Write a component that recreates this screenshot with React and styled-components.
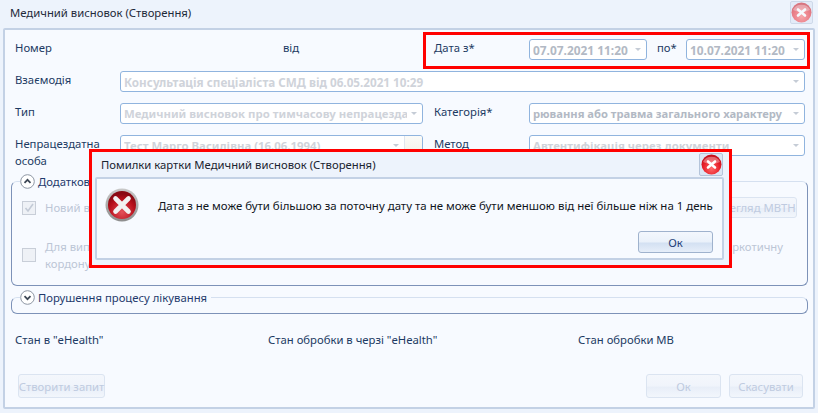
import React from 'react';
import styled, { createGlobalStyle } from 'styled-components';

const GlobalStyle = createGlobalStyle`
  html, body {
    margin: 0;
    padding: 0;
    overflow: hidden;
  }
  body {
    font-family: "Noto Sans", "Open Sans", sans-serif;
    font-size: 11.3px;
    color: #1c3a63;
  }
`;

const Window = styled.div`
  position: relative;
  width: 818px;
  height: 413px;
  box-sizing: border-box;
  display: flex;
  flex-direction: column;
  padding: 0 3px 4px;
  background: #edf3fc;
`;

const TitleBar = styled.div`
  height: 28px;
  flex: none;
  display: flex;
  align-items: center;
  justify-content: space-between;
  padding: 0 2px 3px 7px;
  box-sizing: border-box;
  color: #1e2a3a;
`;

const CloseButton = styled.div`
  width: ${(p) => (p.$wide ? 24 : 23)}px;
  height: 23px;
  display: flex;
  align-items: center;
  justify-content: center;
  box-sizing: border-box;
  border: 1px solid #b4c4da;
  border-radius: 2px;
  background: #dbe6f5;
  opacity: ${(p) => (p.$dim ? 0.55 : 1)};
`;

const Panel = styled.div`
  flex: 1;
  display: flex;
  flex-direction: column;
  box-sizing: border-box;
  padding: 9px 8px 9px 10px;
  border: 2px solid #c3d1e5;
  border-radius: 2px;
  background: #f7faff;
`;

const FormRow = styled.div`
  display: grid;
  grid-template-columns: 105px 303px 11px 95px 276px;
  margin-bottom: ${(p) => p.$gap ?? 11}px;
`;

const Label = styled.div`
  line-height: 17px;
  grid-column: ${(p) => p.$col ?? 'auto'};
`;

const Combo = styled.div`
  height: 21px;
  box-sizing: border-box;
  display: flex;
  align-items: center;
  padding: 0 ${(p) => (p.$split ? 0 : 5)}px 0 3px;
  border: 1px solid #90b4de;
  border-radius: 3px;
  background: #fff;
  font-weight: 700;
  font-size: ${(p) => p.$size ?? 11.4}px;
  color: ${(p) => (p.$dark ? '#b2b9c4' : '#cfd3da')};
  grid-column: ${(p) => p.$col ?? 'auto'};
  white-space: nowrap;
  width: ${(p) => (p.$w ? `${p.$w}px` : 'auto')};
  min-width: 0;
`;

const ComboText = styled.span`
  flex: 1;
  min-width: 0;
  overflow: hidden;
`;

const Arrow = styled.span`
  flex: none;
  margin-left: 4px;
  width: 0;
  height: 0;
  border-left: 3px solid transparent;
  border-right: 3px solid transparent;
  border-top: 3px solid #c5ccd6;
`;

const SplitEdge = styled.span`
  flex: none;
  align-self: stretch;
  width: 17px;
  margin-left: 5px;
  border-left: 1px solid #dfe5ee;
  border-radius: 0 2px 2px 0;
  background: linear-gradient(#fbfbf8, #f3f1e8);
`;

const FromLabel = styled.div`
  line-height: 17px;
  padding-left: 163px;
`;

const DateCell = styled.div`
  grid-column: 5;
  display: flex;
`;

const ToLabel = styled.div`
  width: 39px;
  padding-left: 10px;
  box-sizing: border-box;
  line-height: 17px;
  flex: none;
`;

const Group = styled.fieldset`
  margin: ${(p) => p.$top ?? 0}px -3px 0 -4px;
  padding: 7px 10px 0;
  min-width: 0;
  height: ${(p) => p.$h}px;
  box-sizing: border-box;
  border: 1px solid #7d92b8;
  border-top-color: #d5e0f0;
  border-radius: 6px;
`;

const GroupTitle = styled.legend`
  display: flex;
  align-items: center;
  gap: 3px;
  margin-left: -2px;
  padding: 0 4px 0 0;
  height: 18px;
  color: #1f3a6d;
`;

const Expander = styled.svg`
  width: 15px;
  height: 15px;
  flex: none;
`;

const OptionRow = styled.div`
  display: flex;
  align-items: flex-start;
  justify-content: space-between;
  height: ${(p) => p.$h}px;
  color: #bcc6d6;
`;

const Check = styled.label`
  display: flex;
  align-items: center;
  gap: 9px;
  min-height: 21px;
  line-height: 17px;
`;

const CheckBox = styled.span`
  width: 14px;
  height: 14px;
  flex: none;
  box-sizing: border-box;
  display: flex;
  align-items: center;
  justify-content: center;
  border: 1px solid #c8ced8;
  background: #eef1f6;
`;

const SideText = styled.div`
  line-height: 17px;
  margin-right: 14px;
`;

const StateRow = styled.div`
  display: grid;
  grid-template-columns: 253px 310px auto;
  margin-top: 23px;
  line-height: 17px;
`;

const Footer = styled.div`
  margin-top: auto;
  margin-left: 3px;
  display: flex;
  justify-content: space-between;
`;

const Actions = styled.div`
  display: flex;
  gap: 8px;
  margin-right: 2px;
`;

const Button = styled.div`
  width: ${(p) => p.$w}px;
  height: ${(p) => p.$h ?? 24}px;
  box-sizing: border-box;
  display: flex;
  align-items: center;
  justify-content: center;
  border: 1px solid ${(p) => (p.$active ? '#9fb2cd' : '#dbe4f1')};
  border-radius: 3px;
  background: ${(p) =>
    p.$active
      ? 'linear-gradient(#f3f7fd 0%, #eaf1fa 50%, #d3e0f2 55%, #e6eef9 100%)'
      : 'linear-gradient(#f4f7fc 0%, #f0f4fb 50%, #e8eef8 55%, #f2f6fc 100%)'};
  color: ${(p) => (p.$active ? '#1f3f78' : '#bfcbe0')};
  white-space: nowrap;
`;

const Highlight = styled.div`
  position: absolute;
  left: 423px;
  top: 32px;
  width: 387px;
  height: 37px;
  box-sizing: border-box;
  border: 3px solid #f00;
  pointer-events: none;
`;

const Dialog = styled.div`
  position: absolute;
  left: 89px;
  top: 149px;
  width: 643px;
  height: 119px;
  box-sizing: border-box;
  display: flex;
  flex-direction: column;
  padding: 0 5px 5px 3px;
  border: 3px solid #f00;
  background: #edf3fc;
`;

const DialogTitle = styled(TitleBar)`
  height: 25px;
  padding: 0 1px 0 6px;
  color: #1a2430;
`;

const DialogBody = styled.div`
  flex: 1;
  display: flex;
  flex-direction: column;
  box-sizing: border-box;
  padding: 9px 9px 4px 8px;
  border: 2px solid #c3d1e5;
  border-radius: 2px;
  background: #f7faff;
`;

const Message = styled.div`
  display: flex;
  align-items: center;
  gap: 19px;
  font-size: 11.45px;
  color: #10151c;
  white-space: nowrap;
`;

const DialogFooter = styled.div`
  margin-top: auto;
  padding-bottom: 1px;
  display: flex;
  justify-content: flex-end;
`;

const CloseIcon = ({ id }) => (
  <svg width="21" height="21" viewBox="0 0 21 21">
    <defs>
      <radialGradient id={id} cx="50%" cy="70%" r="60%">
        <stop offset="0%" stopColor="#ff6a6a" />
        <stop offset="70%" stopColor="#e8202a" />
        <stop offset="100%" stopColor="#c8101c" />
      </radialGradient>
    </defs>
    <circle cx="10.5" cy="10.5" r="10" fill={`url(#${id})`} />
    <path d="M2 8a9 8 0 0 1 17 0q-8.500 4-17 0z" fill="#fff" opacity="0.35" />
    <path d="M7 7.500l7 6M14 7.500l-7 6" stroke="#fff" strokeWidth="2.600" strokeLinecap="round" />
  </svg>
);

const ErrorIcon = () => (
  <svg width="34" height="34" viewBox="0 0 34 34">
    <defs>
      <radialGradient id="errFill" cx="50%" cy="75%" r="65%">
        <stop offset="0%" stopColor="#e4525a" />
        <stop offset="70%" stopColor="#b8101c" />
        <stop offset="100%" stopColor="#8a0a14" />
      </radialGradient>
      <linearGradient id="errRing" x1="0" y1="0" x2="0" y2="1">
        <stop offset="0%" stopColor="#c9c9c9" />
        <stop offset="100%" stopColor="#8d8d8d" />
      </linearGradient>
    </defs>
    <circle cx="17" cy="17" r="16.500" fill="url(#errRing)" />
    <circle cx="17" cy="17" r="14" fill="url(#errFill)" />
    <path d="M10.500 10.500l13 13M23.500 10.500l-13 13" stroke="#f2f2f2" strokeWidth="4.600" strokeLinecap="round" />
  </svg>
);

const UpChevron = () => (
  <Expander viewBox="0 0 15 15">
    <circle cx="7.500" cy="7.500" r="6.800" fill="#fff" stroke="#8d96a3" />
    <path d="M4.500 8.800l3-3 3 3" fill="none" stroke="#3c4654" strokeWidth="1.700" />
  </Expander>
);

const DownChevron = () => (
  <Expander viewBox="0 0 15 15">
    <circle cx="7.500" cy="7.500" r="6.800" fill="#fff" stroke="#8d96a3" />
    <path d="M4.500 6.200l3 3 3-3" fill="none" stroke="#3c4654" strokeWidth="1.700" />
  </Expander>
);

const Select = ({ children, ...rest }) => (
  <Combo {...rest}>
    <ComboText>{children}</ComboText>
    <Arrow />
    {rest.$split && <SplitEdge />}
  </Combo>
);

const App = () => (
  <>
    <GlobalStyle />
    <Window>
      <TitleBar>
        <span>Медичний висновок (Створення)</span>
        <CloseButton $dim>
          <CloseIcon id="closeMain" />
        </CloseButton>
      </TitleBar>
      <Panel>
        <FormRow>
          <Label>Номер</Label>
          <FromLabel>від</FromLabel>
          <Label $col="4">Дата з*</Label>
          <DateCell>
            <Select $dark $size={11.9} $w={118}>07.07.2021 11:20</Select>
            <ToLabel>по*</ToLabel>
            <Select $dark $size={11.9} $w={119}>10.07.2021 11:20</Select>
          </DateCell>
        </FormRow>
        <FormRow>
          <Label>Взаємодія</Label>
          <Select $col="2 / 6" $size={11.7}>Консультація спеціаліста СМД від 06.05.2021 10:29</Select>
        </FormRow>
        <FormRow>
          <Label>Тип</Label>
          <Select>Медичний висновок про тимчасову непрацезда</Select>
          <Label $col="4">Категорія*</Label>
          <Select $dark $size={11.2}>рювання або травма загального характеру</Select>
        </FormRow>
        <FormRow $gap={3}>
          <Label>Непрацездатна особа</Label>
          <Select $split>Тест Марго Василівна (16.06.1994)</Select>
          <Label $col="4">Метод</Label>
          <Select>Автентифікація через документи</Select>
        </FormRow>
        <Group $h={114}>
          <GroupTitle>
            <UpChevron />
            Додаткова інформація
          </GroupTitle>
          <OptionRow $h={41}>
            <Check>
              <CheckBox>
                <svg width="10" height="10" viewBox="0 0 10 10">
                  <path d="M1.500 5l2.500 3 5-7" fill="none" stroke="#c3cad6" strokeWidth="1.600" />
                </svg>
              </CheckBox>
              Новий випадок
            </Check>
            <Button $w={90} $h={21}>Перегляд МВТН</Button>
          </OptionRow>
          <OptionRow $h={36}>
            <Check>
              <CheckBox />
              <span>
                Для випадків
                <br />
                кордону
              </span>
            </Check>
            <SideText>наркотичну</SideText>
          </OptionRow>
        </Group>
        <Group $h={20} $top={2}>
          <GroupTitle>
            <DownChevron />
            Порушення процесу лікування
          </GroupTitle>
        </Group>
        <StateRow>
          <span>Стан в "eHealth"</span>
          <span>Стан обробки в черзі "eHealth"</span>
          <span>Стан обробки МВ</span>
        </StateRow>
        <Footer>
          <Button $w={87}>Створити запит</Button>
          <Actions>
            <Button $w={75}>Ок</Button>
            <Button $w={74}>Скасувати</Button>
          </Actions>
        </Footer>
      </Panel>
      <Highlight />
      <Dialog>
        <DialogTitle>
          <span>Помилки картки Медичний висновок (Створення)</span>
          <CloseButton $wide>
            <CloseIcon id="closeDialog" />
          </CloseButton>
        </DialogTitle>
        <DialogBody>
          <Message>
            <ErrorIcon />
            <span>Дата з не може бути більшою за поточну дату та не може бути меншою від неї більше ніж на 1 день</span>
          </Message>
          <DialogFooter>
            <Button $active $w={75} $h={22}>Ок</Button>
          </DialogFooter>
        </DialogBody>
      </Dialog>
    </Window>
  </>
);

export default App;
